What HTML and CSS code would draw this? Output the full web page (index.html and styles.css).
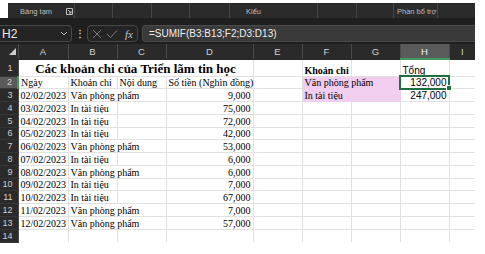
FILE: index.html
```html
<!DOCTYPE html>
<html>
<head>
<meta charset="utf-8">
<meta name="viewport" content="width=device-width, initial-scale=1">
<link rel="stylesheet" href="styles.css">
</head>
<body>
<div class="excel">

  <div class="ribbon">
    <div class="rgroup g1">
      <span class="rlabel">Bảng tạm</span>
      <svg class="launcher" width="7" height="7" viewBox="0 0 7 7"><path d="M0.5 0.5 H6.5 V6.5 H0.5 Z M2 2 L5 5 M5 3 V5 H3" fill="none" stroke="#bdbdbd" stroke-width="1"/></svg>
    </div>
    <div class="rgroup g2"></div>
    <div class="rgroup g3"></div>
    <div class="rgroup g4"></div>
    <div class="rgroup g5"></div>
    <div class="rgroup g6"><span class="rlabel">Kiểu</span></div>
    <div class="rgroup g7"></div>
    <div class="rgroup g8"></div>
    <div class="rgroup g9"><span class="rlabel">Phần bổ trợ</span></div>
    <div class="rgroup g10"></div>
  </div>

  <div class="fbar">
    <div class="namebox">
      <span>H2</span>
      <svg width="8" height="5" viewBox="0 0 8 5"><path d="M1 1 L4 4 L7 1" fill="none" stroke="#bdbdbd" stroke-width="1"/></svg>
    </div>
    <div class="dots">⋮</div>
    <div class="fxbox">
      <svg width="10" height="10" viewBox="0 0 10 10"><path d="M1 1 L9 9 M9 1 L1 9" stroke="#7a7a7a" stroke-width="1"/></svg>
      <svg width="12" height="10" viewBox="0 0 12 10"><path d="M1 5 L4.5 8.5 L11 1.5" fill="none" stroke="#7a7a7a" stroke-width="1"/></svg>
      <i class="fx">fx</i>
    </div>
    <div class="formula">=SUMIF(B3:B13;F2;D3:D13)</div>
  </div>

  <table class="sheet">
    <colgroup>
      <col class="c-rh"><col class="c-a"><col class="c-n"><col class="c-n"><col class="c-d">
      <col class="c-n"><col class="c-n"><col class="c-n"><col class="c-n"><col class="c-i">
    </colgroup>
    <tr class="colhead">
      <th class="corner"><span class="tri"></span></th>
      <th>A</th><th>B</th><th>C</th><th>D</th><th>E</th><th>F</th><th>G</th><th class="sel">H</th><th class="last">I</th>
    </tr>
    <tr class="r-title">
      <th class="rh">1</th>
      <td colspan="4" class="title">Các khoản chi của Triển lãm tin học</td>
      <td></td><td class="b">Khoản chi</td><td></td><td class="sans">Tổng</td><td></td>
    </tr>
    <tr>
      <th class="rh cur">2</th>
      <td>Ngày</td><td>Khoản chi</td><td>Nội dung</td><td>Số tiền (Nghìn đồng)</td><td></td>
      <td class="pink ov">Văn phòng phẩm</td><td class="pink"></td><td class="sans num active">132,000</td><td></td>
    </tr>
    <tr>
      <th class="rh">3</th>
      <td class="num">02/02/2023</td><td class="ov">Văn phòng phẩm</td><td></td><td class="num">9,000</td><td></td>
      <td class="pink ov">In tài tiệu</td><td class="pink"></td><td class="sans num">247,000</td><td></td>
    </tr>
    <tr>
      <th class="rh">4</th>
      <td class="num">03/02/2023</td><td>In tài tiệu</td><td></td><td class="num">75,000</td><td></td><td></td><td></td><td></td><td></td>
    </tr>
    <tr>
      <th class="rh">5</th>
      <td class="num">04/02/2023</td><td>In tài tiệu</td><td></td><td class="num">72,000</td><td></td><td></td><td></td><td></td><td></td>
    </tr>
    <tr>
      <th class="rh">6</th>
      <td class="num">05/02/2023</td><td>In tài tiệu</td><td></td><td class="num">42,000</td><td></td><td></td><td></td><td></td><td></td>
    </tr>
    <tr>
      <th class="rh">7</th>
      <td class="num">06/02/2023</td><td class="ov">Văn phòng phẩm</td><td></td><td class="num">53,000</td><td></td><td></td><td></td><td></td><td></td>
    </tr>
    <tr>
      <th class="rh">8</th>
      <td class="num">07/02/2023</td><td>In tài tiệu</td><td></td><td class="num">6,000</td><td></td><td></td><td></td><td></td><td></td>
    </tr>
    <tr>
      <th class="rh">9</th>
      <td class="num">08/02/2023</td><td class="ov">Văn phòng phẩm</td><td></td><td class="num">6,000</td><td></td><td></td><td></td><td></td><td></td>
    </tr>
    <tr>
      <th class="rh">10</th>
      <td class="num">09/02/2023</td><td>In tài tiệu</td><td></td><td class="num">7,000</td><td></td><td></td><td></td><td></td><td></td>
    </tr>
    <tr>
      <th class="rh">11</th>
      <td class="num">10/02/2023</td><td>In tài tiệu</td><td></td><td class="num">67,000</td><td></td><td></td><td></td><td></td><td></td>
    </tr>
    <tr>
      <th class="rh">12</th>
      <td class="num">11/02/2023</td><td class="ov">Văn phòng phẩm</td><td></td><td class="num">7,000</td><td></td><td></td><td></td><td></td><td></td>
    </tr>
    <tr>
      <th class="rh">13</th>
      <td class="num">12/02/2023</td><td class="ov">Văn phòng phẩm</td><td></td><td class="num">57,000</td><td></td><td></td><td></td><td></td><td></td>
    </tr>
    <tr class="r-last">
      <th class="rh">14</th>
      <td></td><td></td><td></td><td></td><td></td><td></td><td></td><td></td><td></td>
    </tr>
  </table>

</div>
</body>
</html>
```

FILE: styles.css
```css
body {
  margin: 0;
  background: #fff;
  font-family: "Liberation Sans", Arial, sans-serif;
}

.excel {
  width: 475px;
  padding-top: 3px;
}

/* ribbon group labels */
.ribbon {
  margin-left: 8px;
  height: 15px;
  background: #2b2b2b;
  display: flex;
  font-size: 7.5px;
  color: #bdbdbd;
}

.rgroup {
  box-sizing: border-box;
  border-right: 1px solid #454545;
  display: flex;
  align-items: flex-end;
  padding-bottom: 2px;
}

.g1 { width: 67px; padding-left: 12px; }
.g2 { width: 38px; }
.g3 { width: 39px; }
.g4 { width: 38px; }
.g5 { width: 40px; }
.g6 { width: 88px; padding-left: 16px; }
.g7 { width: 39px; }
.g8 { width: 37px; }
.g9 { width: 44px; padding-left: 3px; }
.g10 { width: 37px; border-right: none; }

.launcher {
  margin-left: 14px;
  margin-bottom: 1px;
}

/* formula bar */
.fbar {
  height: 26px;
  box-sizing: border-box;
  background: #1f1f1f;
  display: flex;
  align-items: flex-start;
  padding-top: 7px;
}

.namebox {
  box-sizing: border-box;
  width: 72px;
  height: 17px;
  border: 1px solid #474747;
  border-left: none;
  border-radius: 0 4px 4px 0;
  background: #242424;
  display: flex;
  align-items: center;
  justify-content: space-between;
  padding: 0 3px 0 2px;
  color: #ececec;
  font-size: 12px;
}

.dots {
  width: 15px;
  text-align: center;
  color: #c8c8c8;
  font-size: 10px;
  line-height: 17px;
  font-weight: bold;
}

.fxbox {
  box-sizing: border-box;
  width: 51px;
  height: 17px;
  border: 1px solid #474747;
  border-radius: 4px;
  background: #242424;
  display: flex;
  align-items: center;
  gap: 4px;
  padding-left: 4px;
}

.fx {
  font-family: "Liberation Serif", serif;
  font-size: 11px;
  color: #c8c8c8;
  margin-left: 3px;
}

.formula {
  box-sizing: border-box;
  flex: 1;
  margin-left: 4px;
  height: 17px;
  border: 1px solid #4a4a4a;
  border-right: none;
  border-radius: 4px 0 0 4px;
  background: #3a3a3a;
  color: #f0f0f0;
  font-size: 10px;
  line-height: 15px;
  padding-left: 6px;
}

/* grid */
.sheet {
  width: 475px;
  table-layout: fixed;
  border-collapse: collapse;
  font-family: "Liberation Serif", serif;
  font-size: 10px;
  color: #000;
}

.c-rh { width: 18px; }
.c-a { width: 50px; }
.c-n { width: 49px; }
.c-d { width: 87px; }
.c-i { width: 26px; }

.colhead th {
  height: 14px;
  padding: 0;
  background: #2a2a2a;
  color: #d2d2d2;
  font-family: "Liberation Sans", Arial, sans-serif;
  font-size: 9.5px;
  font-weight: normal;
  border-left: 1px solid #4a4a4a;
  border-bottom: 1px solid #2a2a2a;
}

.colhead th.sel {
  background: #5a5a5a;
  color: #f2f2f2;
  border-bottom: 2px solid #3f9b5b;
}

.colhead .corner {
  border-left: none;
  text-align: right;
  vertical-align: bottom;
}

.tri {
  display: inline-block;
  width: 0;
  height: 0;
  border-left: 7px solid transparent;
  border-bottom: 7px solid #cfcfcf;
  margin: 0 2px 2px 0;
}

.sheet tr {
  height: 12.75px;
}

.sheet tr.r-title {
  height: 17px;
}

.sheet tr.r-last {
  height: 13px;
}

.rh {
  padding: 0 5px 0 0;
  background: #2a2a2a;
  color: #cfcfcf;
  font-family: "Liberation Sans", Arial, sans-serif;
  font-size: 9px;
  font-weight: normal;
  text-align: right;
  border-right: 1px solid #4a4a4a;
  border-bottom: 1px solid #363636;
}

.rh.cur {
  background: #5a5a5a;
  border-right: 2px solid #3f9b5b;
}

.sheet td {
  padding: 0 2px;
  white-space: nowrap;
  vertical-align: bottom;
  line-height: 11px;
  border: 1px solid #e1e1e1;
  overflow: visible;
}

.sheet td:last-child {
  border-right: none;
}

.r-last td {
  border-bottom: none;
}

.sheet td.title {
  text-align: center;
  font-weight: bold;
  font-size: 13px;
  line-height: 15px;
}

.r-title td {
  border-top: none;
}

.sheet td.b {
  font-weight: bold;
}

.sheet td.sans {
  font-family: "Liberation Sans", Arial, sans-serif;
}

.sheet td.num {
  text-align: right;
}

.sheet td.ov {
  border-right: hidden;
}

.sheet td.pink {
  background: #f1cdef;
  border-color: #f1cdef;
}

.sheet td.active {
  position: relative;
  outline: 2px solid #1f6e41;
  outline-offset: -1px;
}

.sheet td.active::after {
  content: "";
  position: absolute;
  right: -3px;
  bottom: -3px;
  width: 4px;
  height: 4px;
  background: #1f6e41;
  border: 1px solid #fff;
}
```
